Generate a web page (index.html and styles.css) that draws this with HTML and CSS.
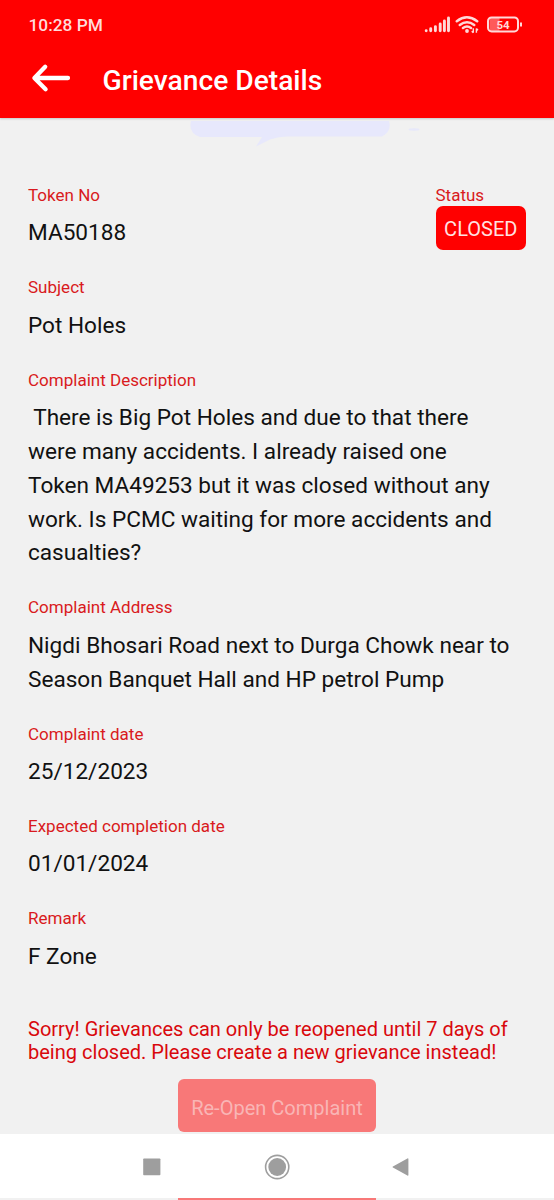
FILE: index.html
```html
<!DOCTYPE html>
<html lang="en">
<head>
<meta charset="utf-8">
<title>Grievance Details</title>
<link rel="stylesheet" href="styles.css">
</head>
<body>
<div class="screen">
  <header class="header">
    <div class="status-bar">
      <span class="clock">10:28 PM</span>
      <svg class="status-icons" width="100" height="22" viewBox="0 0 100 22" fill="none" stroke="#ffd9d9">
        <g stroke-width="2.9" stroke-linecap="round">
          <path d="M3.200 16.700v.1M7.700 14.800v2M12.400 12.600v4.200M17.200 10v6.800M21.400 7v9.800M25.500 4v12.800"/>
        </g>
        <g stroke-width="2.5" stroke-linecap="round">
          <path d="M33.800 7.200q10-7.800 20.400 0M36.800 11q7.200-5.500 14.400 0M40 14q4-3 8 0"/>
        </g>
        <circle cx="44" cy="17" r="1.900" fill="#ffd9d9" stroke="none"/>
        <path d="M50.300 18.800v-4.600M53.400 14.600v4.200M48.700 17.200l1.600 1.600M55 16.200l-1.600-1.600" stroke-width="1.400"/>
        <rect x="66.500" y="4" width="10" height="14" fill="#ff5a5a" stroke="none"/>
        <rect x="65" y="3.400" width="30" height="14" rx="3.600" stroke-width="2"/>
        <path d="M98 8.500v4" stroke-width="2"/>
        <text class="battery-text" x="80" y="14.600">54</text>
      </svg>
    </div>
    <div class="title-bar">
      <svg class="back" width="40" height="30" viewBox="0 0 40 30" fill="none" stroke="#fff" stroke-width="4.300" stroke-linecap="round" stroke-linejoin="round">
        <path d="M14.200 3.800L3.400 15l11.200 11.200M4.200 15H37"/>
      </svg>
      <h1 class="title">Grievance Details</h1>
    </div>
  </header>
  <main class="content">
    <svg class="backdrop" width="554" height="32" viewBox="0 0 554 32">
      <path fill="#e7e8fc" d="M191 3H389q3 10-7 15.500H287q-8 0-17 3l-14 7 6-9.500H200q-12-4-9-16z"/>
      <ellipse cx="414" cy="11.500" rx="5.500" ry="1.200" fill="#e7e8fa"/>
    </svg>
    <div class="top-row">
      <section class="field">
        <h2 class="label">Token No</h2>
        <p class="value">MA50188</p>
      </section>
      <section class="state">
        <h2 class="label">Status</h2>
        <span class="badge">CLOSED</span>
      </section>
    </div>
    <section class="field">
      <h2 class="label">Subject</h2>
      <p class="value">Pot Holes</p>
    </section>
    <section class="field">
      <h2 class="label">Complaint Description</h2>
      <p class="value"> There is Big Pot Holes and due to that there
were many accidents. I already raised one
Token MA49253 but it was closed without any
work. Is PCMC waiting for more accidents and
casualties?</p>
    </section>
    <section class="field">
      <h2 class="label">Complaint Address</h2>
      <p class="value">Nigdi Bhosari Road next to Durga Chowk near to
Season Banquet Hall and HP petrol Pump</p>
    </section>
    <section class="field">
      <h2 class="label">Complaint date</h2>
      <p class="value">25/12/2023</p>
    </section>
    <section class="field">
      <h2 class="label">Expected completion date</h2>
      <p class="value">01/01/2024</p>
    </section>
    <section class="field">
      <h2 class="label">Remark</h2>
      <p class="value">F Zone</p>
    </section>
    <p class="notice">Sorry! Grievances can only be reopened until 7 days of
being closed. Please create a new grievance instead!</p>
    <button class="reopen" disabled>Re-Open Complaint</button>
  </main>
  <nav class="nav">
    <svg width="554" height="64" viewBox="0 0 554 64" fill="#9e9e9e">
      <rect x="143.200" y="24.500" width="17.200" height="16.800" rx=".8"/>
      <circle cx="277.200" cy="33" r="11.600" fill="none" stroke="#9e9e9e" stroke-width="1.600"/>
      <circle cx="277.200" cy="33" r="8.900"/>
      <path d="M407.400 24.400q1-.5 1 .6v16q0 1.200-1 .6l-14.500-8q-.9-.6 0-1.200z"/>
    </svg>
  </nav>
  <div class="under-nav"><div class="under-button"></div></div>
</div>
</body>
</html>
```
FILE: styles.css
```css
body {
  margin: 0;
  background: #f1f1f1;
  font-family: Roboto, sans-serif;
}
.screen {
  width: 554px;
  height: 1200px;
  display: flex;
  flex-direction: column;
  overflow: hidden;
}
.header {
  height: 118px;
  flex: none;
  background: #ff0000;
  box-shadow: 0 1px 2px rgba(0, 0, 0, .18);
  position: relative;
  z-index: 1;
}
.status-bar {
  display: flex;
  justify-content: space-between;
  align-items: center;
  height: 42px;
  padding: 7px 31px 0 28.500px;
  box-sizing: border-box;
}
.clock {
  color: #ffdcdc;
  font-size: 17.300px;
  font-weight: 500;
}
.battery-text {
  fill: #ffd9d9;
  stroke: none;
  font-size: 11.500px;
  font-weight: 700;
  text-anchor: middle;
}
.title-bar {
  display: flex;
  align-items: center;
  gap: 31.500px;
  height: 72px;
  padding-left: 31px;
}
.back {
  flex: none;
}
.title {
  margin: 4px 0 0;
  color: #fff;
  font-size: 28.200px;
  font-weight: 500;
  white-space: nowrap;
}
.content {
  height: 1015.500px;
  flex: none;
  display: flex;
  flex-direction: column;
  padding: 0 28px;
  box-sizing: border-box;
}
.backdrop {
  flex: none;
  margin: 0 -28px 34px;
}
.top-row {
  display: flex;
  justify-content: space-between;
}
.field {
  padding-bottom: 26.100px;
}
.label {
  margin: 0;
  color: #d91a20;
  font-size: 17.030px;
  font-weight: 400;
  line-height: 22.600px;
}
.value {
  margin: 9.800px 0 0;
  color: #111;
  font-size: 22.600px;
  line-height: 33.850px;
  white-space: pre;
}
.badge {
  display: block;
  width: 90.500px;
  height: 44px;
  margin-top: -1px;
  border-radius: 7px;
  background: #ff0000;
  color: #ffe2e2;
  font-size: 20px;
  line-height: 46px;
  text-align: center;
}
.notice {
  margin: 18px 0 0;
  color: #d9080c;
  font-size: 20.040px;
  line-height: 23.800px;
  white-space: pre;
}
.reopen {
  align-self: center;
  flex: none;
  width: 197.500px;
  height: 52.500px;
  margin-top: 14.200px;
  padding: 4px 0 0;
  border: 0;
  border-radius: 6px;
  background: #f87878;
  color: #f9b5b5;
  font: 400 20.040px Roboto, sans-serif;
}
.nav {
  height: 64.500px;
  flex: none;
  background: #fff;
}
.under-nav {
  height: 2px;
  display: flex;
  justify-content: center;
}
.under-button {
  width: 197.500px;
  background: #f87878;
}
```
